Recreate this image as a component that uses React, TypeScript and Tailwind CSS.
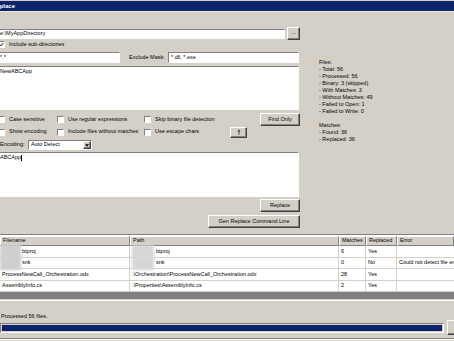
import React from "react";

const sunken = "border border-t-[#808080] border-l-[#808080] border-b-white border-r-white bg-white";
const raised =
  "border border-t-white border-l-white border-b-[#404040] border-r-[#404040] shadow-[inset_-1px_-1px_0_#808080] bg-[#d4d0c8] flex items-center justify-center";

const Check = ({ on = false }: { on?: boolean }) => (
  <span className={`w-[7px] h-[7px] shrink-0 ${sunken} flex items-center justify-center`}>
    {on && (
      <svg viewBox="0 0 7 7" className="w-[5px] h-[5px]">
        <path d="M1 3.5 L2.8 5.3 L6 1.5" stroke="#000" strokeWidth="1.3" fill="none" />
      </svg>
    )}
  </span>
);

const Opt = ({ label, w }: { label: string; w: string }) => (
  <div className={`flex items-center gap-[4px] ${w}`}>
    <Check />
    <span>{label}</span>
  </div>
);

const stats = [
  "Files:",
  "- Total: 56",
  "- Processed: 56",
  "- Binary: 3 (skipped)",
  "- With Matches: 3",
  "- Without Matches: 49",
  "- Failed to Open: 1",
  "- Failed to Write: 0",
  "",
  "Matches:",
  "- Found: 36",
  "- Replaced: 36",
];

const rows = [
  { file: "btproj", path: "btproj", m: "6", r: "Yes", e: "", blur: true },
  { file: "snk", path: "snk", m: "0", r: "No", e: "Could not detect file encoding", blur: true },
  {
    file: "ProcessNewCall_Orchestration.odx",
    path: ".\\Orchestration\\ProcessNewCall_Orchestration.odx",
    m: "28",
    r: "Yes",
    e: "",
    blur: false,
  },
  { file: "AssemblyInfo.cs", path: ".\\Properties\\AssemblyInfo.cs", m: "2", r: "Yes", e: "", blur: false },
];

const cols = ["w-[130px]", "w-[209px]", "w-[27px]", "w-[31px]", "flex-1"];

export default function App() {
  return (
    <div
      className="w-[454px] h-[341px] overflow-hidden bg-[#d4d0c8] text-black text-[5.5px] leading-none"
      style={{ fontFamily: '"Liberation Sans", Arial, sans-serif' }}
    >
      {/* title bar */}
      <div className="h-[12px] pt-[1px] border-b border-[#e8e6e0] bg-[#d4d0c8]">
        <div className="h-[10px] bg-[#0a246a] flex items-center">
          <span className="-ml-[8px] text-white font-bold text-[6px]">Replace</span>
        </div>
      </div>

      <div className="flex">
        {/* left column */}
        <div className="-ml-[5px] w-[305px] flex flex-col pt-[15px]">
          <div className="flex items-center h-[13px] gap-[2px]">
            <div className={`${sunken} h-[10px] w-[290px] flex items-center pl-[4px]`}>e:\MyAppDirectory</div>
            <div className={`${raised} w-[13px] h-[13px] pb-[2px]`}>...</div>
          </div>
          <div className="flex items-center h-[9px] gap-[4px] pl-[3px]">
            <Check on />
            <span>Include sub-directories</span>
          </div>
          <div className="flex items-center h-[11px] mt-[3px]">
            <div className={`${sunken} h-[11px] w-[125px] flex items-center pl-[4px]`}>*.*</div>
            <span className="ml-[9px] w-[39px]">Exclude Mask:</span>
            <div className={`${sunken} h-[11px] w-[131px] flex items-center pl-[2px]`}>*.dll, *.exe</div>
          </div>
          <div className={`${sunken} h-[44px] w-[304px] mt-[3px] pl-[4px] pt-[2px]`}>NewABCApp</div>

          <div className="flex items-center h-[13px] mt-[3px] pl-[3px]">
            <Opt label="Case sensitive" w="w-[59px]" />
            <Opt label="Use regular expressions" w="w-[87px]" />
            <Opt label="Skip binary file detection" w="w-[80px]" />
            <div className={`${raised} ml-auto w-[40px] h-[13px]`}>Find Only</div>
          </div>
          <div className="flex items-center h-[12px] pl-[3px]">
            <Opt label="Show encoding" w="w-[59px]" />
            <Opt label="Include files without matches" w="w-[87px]" />
            <Opt label="Use escape chars" w="w-[80px]" />
            <div className={`${raised} ml-[6px] w-[17px] h-[11px]`}>
              <svg viewBox="0 0 5 7" className="w-[4px] h-[6px]">
                <path d="M2.5 0.5 V7 M0.8 2.2 H4.2" stroke="#000" strokeWidth="0.8" fill="none" />
              </svg>
            </div>
          </div>
          <div className="flex items-center h-[10px] mt-[2px] pl-[5px]">
            <span className="w-[28px]">Encoding:</span>
            <div className={`${sunken} h-[10px] w-[64px] flex items-center pl-[2px] relative`}>
              Auto Detect
              <div className={`${raised} absolute right-0 top-0 w-[8px] h-[8px]`}>
                <svg viewBox="0 0 5 3" className="w-[4px] h-[3px]">
                  <path d="M0 0 H5 L2.5 3 Z" fill="#000" />
                </svg>
              </div>
            </div>
          </div>
          <div className={`${sunken} h-[45px] w-[304px] mt-[2px] pl-[4px] pt-[2px]`}>
            ABCApp<span className="inline-block w-[1px] h-[6px] bg-black align-middle" />
          </div>
          <div className="flex justify-end mt-[2px]">
            <div className={`${raised} w-[40px] h-[13px]`}>Replace</div>
          </div>
          <div className="flex justify-end mt-[3px]">
            <div className={`${raised} w-[92px] h-[13px]`}>Gen Replace Command Line</div>
          </div>
        </div>

        {/* stats */}
        <div className="ml-[19px] pt-[47px] flex flex-col">
          {stats.map((s, i) => (
            <div key={i} className="h-[7px] leading-[7px]">
              {s}
            </div>
          ))}
        </div>
      </div>

      {/* separator */}
      <div className="mt-[6px] h-[2px] border-t border-[#808080] border-b border-b-white" />

      {/* results table */}
      <div className="bg-white">
        <div className="flex h-[10px] bg-[#d4d0c8]">
          {["Filename", "Path", "Matches", "Replaced", "Error"].map((h, i) => (
            <div
              key={h}
              className={`${cols[i]} h-full pl-[2px] flex items-center border-t border-l border-t-white border-l-white border-r border-b border-r-[#808080] border-b-[#808080]`}
            >
              {h}
            </div>
          ))}
        </div>
        {rows.map((r, i) => (
          <div key={i} className="flex h-[11.5px] border-b border-[#d4d0c8]">
            <div className={`${cols[0]} relative flex items-center border-r border-[#d4d0c8] ${r.blur ? "pl-[22px]" : "pl-[2px]"}`}>
              {r.blur && <div className="absolute left-0 -top-[2px] w-[21px] h-[14px] bg-[#cfcfcf] blur-[1.5px]" />}
              {r.file}
            </div>
            <div className={`${cols[1]} relative flex items-center border-r border-[#d4d0c8] ${r.blur ? "pl-[26px]" : "pl-[2px]"}`}>
              {r.blur && <div className="absolute left-[2px] -top-[1px] w-[22px] h-[13px] bg-[#d6d6d6] blur-[1.5px]" />}
              {r.path}
            </div>
            <div className={`${cols[2]} flex items-center pl-[2px] border-r border-[#d4d0c8]`}>{r.m}</div>
            <div className={`${cols[3]} flex items-center pl-[2px] border-r border-[#d4d0c8]`}>{r.r}</div>
            <div className={`${cols[4]} flex items-center pl-[2px] whitespace-nowrap overflow-hidden`}>{r.e}</div>
          </div>
        ))}
        <div className="h-[7px] bg-[#808080]" />
      </div>

      {/* status */}
      <div className="border-t border-white mt-[1px] pt-[12px]">
        <div className="h-[7px] leading-[7px] pl-[1px]">Processed 56 files.</div>
        <div className="flex items-center h-[15px]">
          <div className="w-[444px] shrink-0 h-[10px] border border-t-[#808080] border-l-[#808080] border-b-white border-r-white p-[1px]">
            <div className="w-full h-full bg-[#0a246a]" />
          </div>
          <div className={`${raised} ml-[3px] w-[20px] h-[15px] shrink-0`} />
        </div>
        <div className="mt-[3px] border-t border-[#808080] border-b border-b-white h-[2px]" />
      </div>
    </div>
  );
}
